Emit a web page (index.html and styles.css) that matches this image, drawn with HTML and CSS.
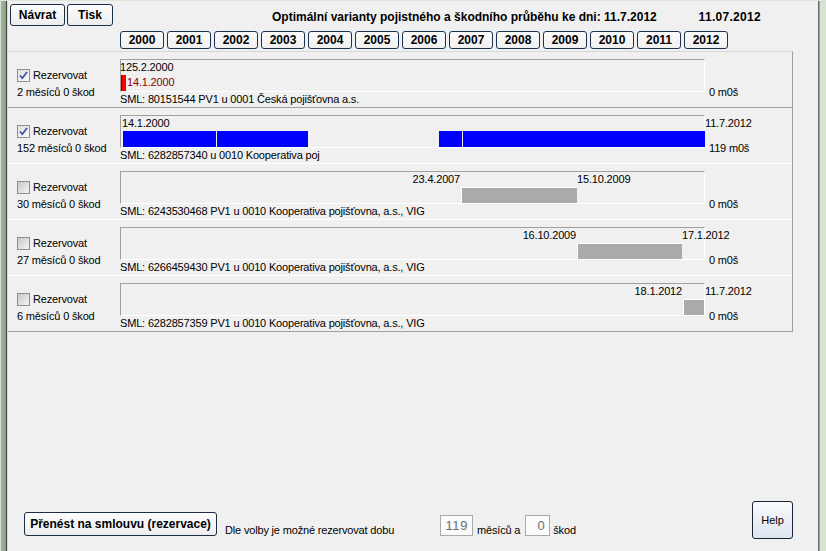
FILE: index.html
```html
<!DOCTYPE html>
<html lang="cs">
<head>
<meta charset="utf-8">
<title>Optimální varianty</title>
<link rel="stylesheet" href="styles.css">
</head>
<body>
<div class="app">
  <div class="frame-left"></div>
  <div class="main">
    <div class="topbar">
      <button class="btn btn-back">Návrat</button>
      <button class="btn btn-print">Tisk</button>
      <div class="title">Optimální varianty pojistného a škodního průběhu ke dni: 11.7.2012</div>
      <div class="today">11.07.2012</div>
    </div>
    <div class="years">
      <button class="year">2000</button><button class="year">2001</button><button class="year">2002</button><button class="year">2003</button><button class="year">2004</button><button class="year">2005</button><button class="year">2006</button><button class="year">2007</button><button class="year">2008</button><button class="year">2009</button><button class="year">2010</button><button class="year">2011</button><button class="year">2012</button>
    </div>
    <div class="panel">
      <div class="row row-sel">
        <div class="sel">
          <div class="chk-line"><span class="cb on"><svg width="11" height="11" viewBox="0 0 11 11"><polyline points="2,5.5 4.3,8.2 9,2" fill="none" stroke="#3650a8" stroke-width="1.7"/></svg></span><span class="chk-label">Rezervovat</span></div>
          <div class="months">2 měsíců 0 škod</div>
        </div>
        <div class="chart">
          <div class="box">
            <span class="lbl" style="left:-1px">125.2.2000</span>
            <span class="mark-blue"></span><span class="mark-red"></span>
            <span class="lbl lbl-red" style="left:6px">14.1.2000</span>
          </div>
          <div class="sml">SML: 80151544 PV1 u 0001 Česká pojišťovna a.s.</div>
        </div>
        <div class="right">0 m0š</div>
      </div>
      <div class="row">
        <div class="sel">
          <div class="chk-line"><span class="cb on"><svg width="11" height="11" viewBox="0 0 11 11"><polyline points="2,5.5 4.3,8.2 9,2" fill="none" stroke="#3650a8" stroke-width="1.7"/></svg></span><span class="chk-label">Rezervovat</span></div>
          <div class="months">152 měsíců 0 škod</div>
        </div>
        <div class="chart">
          <div class="box">
            <span class="lbl" style="left:1px">14.1.2000</span>
            <span class="bar blue" style="left:2px;width:93px"></span>
            <span class="bar blue" style="left:96px;width:91px"></span>
            <span class="bar blue" style="left:318px;width:23px"></span>
            <span class="bar blue" style="left:342px;width:242px"></span>
            <span class="lbl" style="left:584px">11.7.2012</span>
          </div>
          <div class="sml">SML: 6282857340 u 0010 Kooperativa poj</div>
        </div>
        <div class="right">119 m0š</div>
      </div>
      <div class="row">
        <div class="sel">
          <div class="chk-line"><span class="cb"></span><span class="chk-label">Rezervovat</span></div>
          <div class="months">30 měsíců 0 škod</div>
        </div>
        <div class="chart">
          <div class="box">
            <span class="lbl before" style="left:339px">23.4.2007</span>
            <span class="bar gray" style="left:340px;width:116px"></span>
            <span class="lbl" style="left:456px">15.10.2009</span>
          </div>
          <div class="sml">SML: 6243530468 PV1 u 0010 Kooperativa pojišťovna, a.s., VIG</div>
        </div>
        <div class="right">0 m0š</div>
      </div>
      <div class="row">
        <div class="sel">
          <div class="chk-line"><span class="cb"></span><span class="chk-label">Rezervovat</span></div>
          <div class="months">27 měsíců 0 škod</div>
        </div>
        <div class="chart">
          <div class="box">
            <span class="lbl before" style="left:455px">16.10.2009</span>
            <span class="bar gray" style="left:456px;width:105px"></span>
            <span class="lbl" style="left:561px">17.1.2012</span>
          </div>
          <div class="sml">SML: 6266459430 PV1 u 0010 Kooperativa pojišťovna, a.s., VIG</div>
        </div>
        <div class="right">0 m0š</div>
      </div>
      <div class="row row-last">
        <div class="sel">
          <div class="chk-line"><span class="cb"></span><span class="chk-label">Rezervovat</span></div>
          <div class="months">6 měsíců 0 škod</div>
        </div>
        <div class="chart">
          <div class="box">
            <span class="lbl before" style="left:561px">18.1.2012</span>
            <span class="bar gray" style="left:562px;width:21px"></span>
            <span class="lbl" style="left:584px">11.7.2012</span>
          </div>
          <div class="sml">SML: 6282857359 PV1 u 0010 Kooperativa pojišťovna, a.s., VIG</div>
        </div>
        <div class="right">0 m0š</div>
      </div>
    </div>
    <div class="footer">
      <button class="btn transfer">Přenést na smlouvu (rezervace)</button>
      <span class="note">Dle volby je možné rezervovat dobu</span>
      <span class="num num-months">119</span>
      <span class="ftxt ftxt-a">měsíců a</span>
      <span class="num num-dmg">0</span>
      <span class="ftxt ftxt-b">škod</span>
      <button class="help">Help</button>
    </div>
  </div>
  <div class="frame-right"></div>
</div>
</body>
</html>
```
FILE: styles.css
```css
html, body {
  margin: 0;
  padding: 0;
}
body {
  font-family: "Liberation Sans", Arial, sans-serif;
  font-size: 11px;
  line-height: 13px;
  color: #000;
  background: #dbe6d8;
}
.app {
  display: flex;
  width: 826px;
  height: 551px;
  box-sizing: border-box;
  padding-top: 1px;
  background: #dbe6d8;
  overflow: hidden;
}
.frame-left {
  flex: none;
  width: 8px;
  background: linear-gradient(to right, #d4dfd0 0 1px, #a7b6a2 1px, #8d9b89 6px, #3e463c 6px 7px, #d8ddd6 7px 8px);
}
.main {
  flex: none;
  width: 810px;
  background: #f0f0f0;
  display: flex;
  flex-direction: column;
}
.frame-right {
  flex: none;
  width: 8px;
  background: linear-gradient(to right, #6c6c6c 0 1px, #9c9c9c 1px 2px, #d5e3d1 2px);
}

/* top bar */
.topbar {
  display: flex;
  align-items: flex-start;
  height: 27px;
  box-sizing: border-box;
  padding: 3px 0 0 2px;
}
.btn {
  font-family: "Liberation Sans", Arial, sans-serif;
  font-weight: bold;
  font-size: 12px;
  color: #000;
  height: 22px;
  padding: 0;
  border: 1px solid #1d2d44;
  border-radius: 3px;
  background: linear-gradient(#fdfdfd, #ededed);
}
.btn-back { width: 55px; }
.btn-print { width: 46px; margin-left: 2px; }
.title {
  margin-left: 159px;
  margin-top: 6px;
  font-weight: bold;
  font-size: 12px;
  line-height: 14px;
  white-space: nowrap;
}
.today {
  margin-left: auto;
  margin-right: 57px;
  margin-top: 6px;
  font-weight: bold;
  font-size: 12px;
  line-height: 14px;
  letter-spacing: 0.3px;
}

/* year tabs */
.years {
  display: flex;
  gap: 3px;
  margin: 3px 0 0 112px;
  height: 18px;
}
.year {
  width: 44px;
  height: 18px;
  padding: 0;
  font-family: "Liberation Sans", Arial, sans-serif;
  font-weight: bold;
  font-size: 12px;
  line-height: 16px;
  color: #000;
  border: 1px solid #1d3150;
  border-radius: 3px;
  background: linear-gradient(#fafafa, #f0f0f0);
}

/* panel */
.panel {
  margin-top: 2px;
  width: 785px;
  box-sizing: border-box;
  border-top: 1px solid #d6d6d6;
  border-right: 1px solid #a0a0a0;
  border-bottom: 1px solid #a0a0a0;
}
.row {
  display: flex;
  align-items: flex-start;
  height: 56px;
  box-sizing: border-box;
  border-bottom: 1px solid #ffffff;
  letter-spacing: -0.17px;
}
.row-sel { border-bottom-color: #a0a0a0; }
.row-last { border-bottom: none; height: 55px; }

.sel {
  width: 112px;
  flex: none;
  box-sizing: border-box;
  padding: 17px 0 0 9px;
}
.chk-line {
  display: flex;
  align-items: center;
  height: 13px;
}
.cb {
  width: 13px;
  height: 13px;
  box-sizing: border-box;
  border: 1px solid #8e8f8f;
  background: linear-gradient(135deg, #c8c8c8, #f4f4f4);
  display: flex;
  align-items: center;
  justify-content: center;
}
.cb.on {
  background: linear-gradient(135deg, #dedede, #fbfbfb);
}
.cb svg { display: block; }
.chk-label { margin-left: 3px; }
.months { margin-top: 4px; white-space: nowrap; }

.chart {
  width: 585px;
  flex: none;
}
.box {
  position: relative;
  margin-top: 7px;
  height: 33px;
  box-sizing: border-box;
  border-top: 1px solid #a0a0a0;
  border-left: 1px solid #a0a0a0;
  border-right: 1px solid #ffffff;
  border-bottom: 1px solid #ffffff;
}
.lbl {
  position: absolute;
  top: 1px;
  white-space: nowrap;
}
.lbl.before { transform: translateX(-100%); }
.lbl-red { top: 16px; color: #8b0000; }
.mark-blue {
  position: absolute;
  left: 0;
  top: 15px;
  width: 1px;
  height: 16px;
  background: #1a1aa0;
}
.mark-red {
  position: absolute;
  left: 1px;
  top: 15px;
  width: 4px;
  height: 16px;
  background: #ff0000;
}
.bar {
  position: absolute;
  top: 15px;
  height: 16px;
  box-sizing: border-box;
}
.bar.blue { background: #0000ff; }
.bar.gray {
  background: #aaaaaa;
  border-top: 1px solid #ffffff;
  border-left: 1px solid #ffffff;
}
.sml {
  margin-top: 1px;
  white-space: nowrap;
}
.right {
  padding: 34px 0 0 4px;
  white-space: nowrap;
}

/* footer */
.footer {
  margin-top: auto;
  display: flex;
  align-items: flex-end;
  padding: 0 0 12px 16px;
  letter-spacing: -0.17px;
}
.transfer {
  width: 193px;
  height: 24px;
  margin-bottom: 3px;
  letter-spacing: 0;
}
.note {
  width: 215px;
  margin-left: 8px;
  margin-bottom: 2px;
  white-space: nowrap;
}
.num {
  height: 21px;
  box-sizing: border-box;
  border: 1px solid #a9a9a9;
  background: #fbfbfb;
  text-align: right;
  padding-right: 4px;
  font-size: 13px;
  line-height: 19px;
  color: #6e6e6e;
  letter-spacing: 0.6px;
  margin-bottom: 3px;
}
.num-months { width: 33px; }
.num-dmg { width: 25px; }
.ftxt { margin-bottom: 2px; white-space: nowrap; }
.ftxt-a { margin-left: 4px; }
.num-dmg { margin-left: 5px; }
.ftxt-b { margin-left: 3px; }
.help {
  margin-left: auto;
  margin-right: 25px;
  width: 41px;
  height: 38px;
  padding: 0;
  font-family: "Liberation Sans", Arial, sans-serif;
  font-size: 11px;
  color: #000;
  border: 1px solid #1a2638;
  border-radius: 3px;
  background: linear-gradient(#f9fbfd, #dde5ee);
}
```
